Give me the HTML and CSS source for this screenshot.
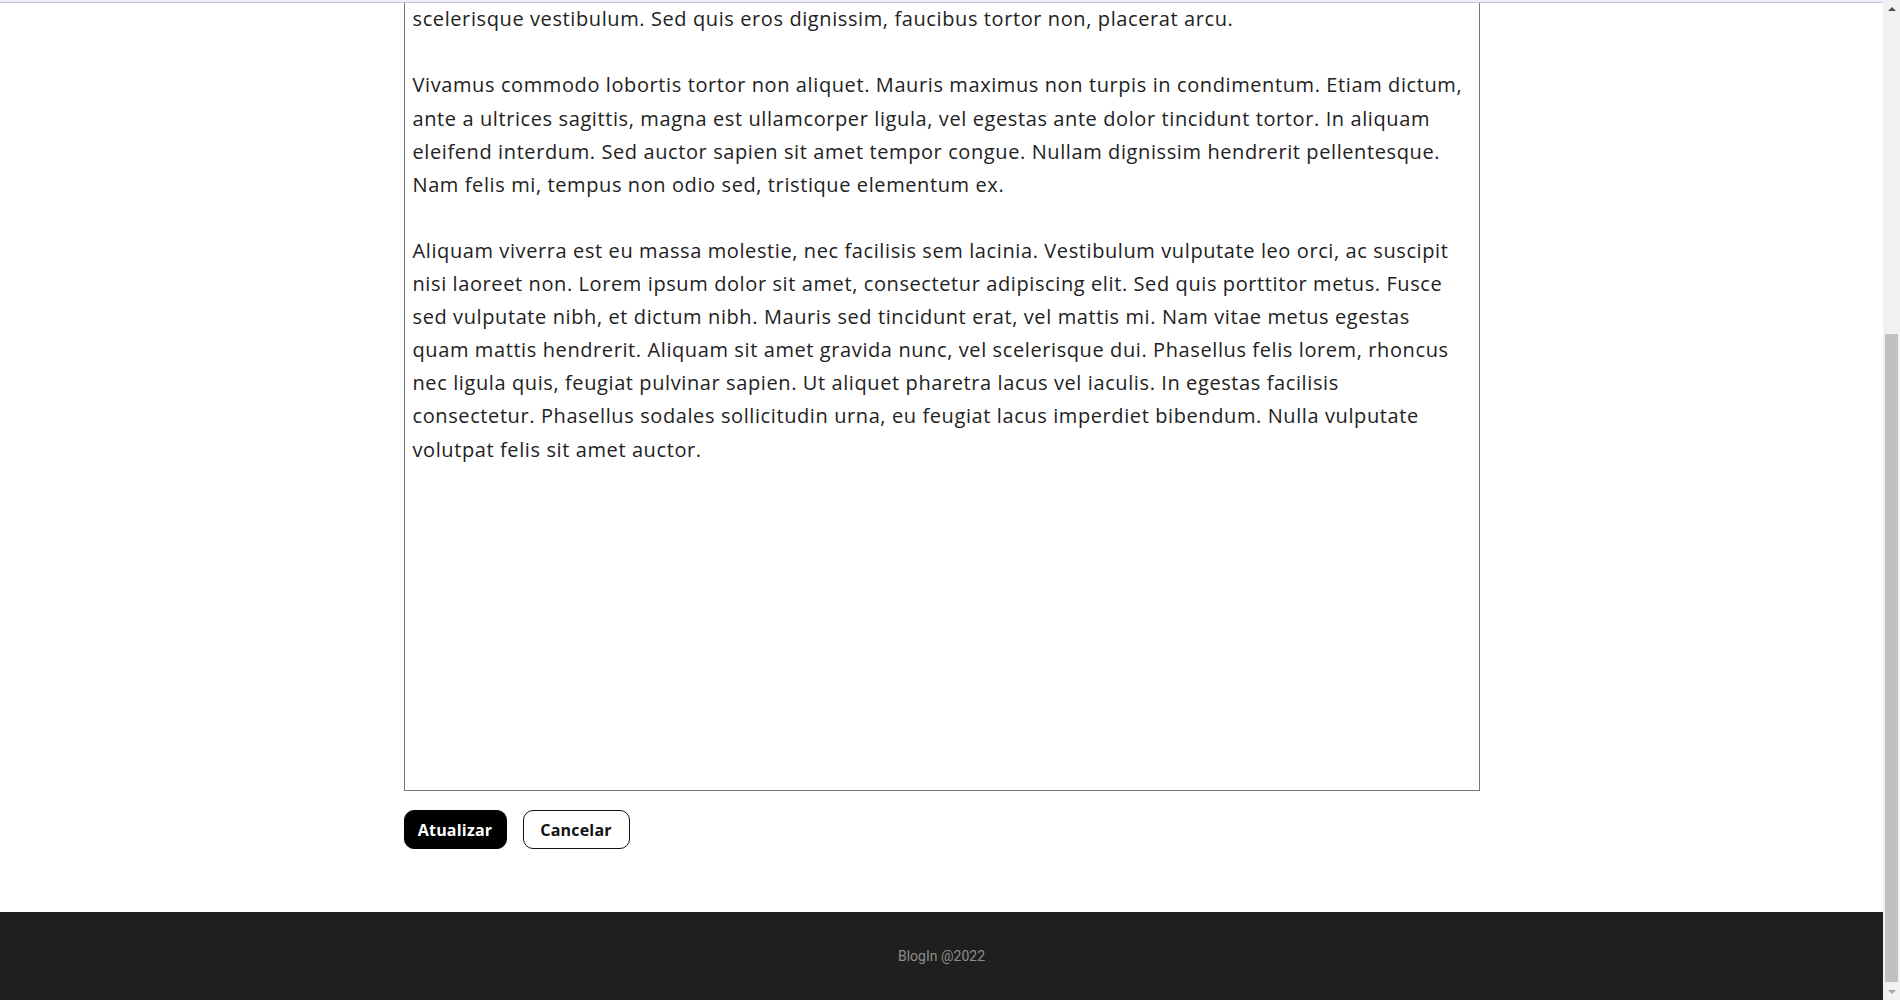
FILE: index.html
```html
<!DOCTYPE html>
<html lang="pt-BR">
<head>
<meta charset="utf-8">
<title>BlogIn - Editar post</title>
<link rel="stylesheet" href="styles.css">
</head>
<body>
<div class="topline"></div>
<div class="scrollbar" aria-hidden="true">
  <span class="sb-arrow sb-up"></span>
  <span class="sb-track"><span class="sb-thumb"></span></span>
  <span class="sb-arrow sb-down"></span>
</div>
<header class="site-header">
  <span class="brand">BlogIn</span>
</header>
<main class="main">
  <form class="editor">
    <h1 class="editor-title">Editar post</h1>
    <input class="field" type="text" value="Lorem ipsum dolor sit amet">
    <input class="field" type="text" value="Categoria">
    <label class="field-label">Conteúdo</label>
    <textarea class="content" wrap="off">Lorem ipsum dolor sit amet, consectetur adipiscing elit. Integer nec odio. Praesent libero. Sed cursus ante
dapibus diam. Sed nisi. Nulla quis sem at nibh elementum imperdiet. Duis sagittis ipsum. Praesent mauris.
Fusce nec tellus sed augue semper porta. Mauris massa. Vestibulum lacinia arcu eget nulla. Class aptent
scelerisque vestibulum. Sed quis eros dignissim, faucibus tortor non, placerat arcu.

Vivamus commodo lobortis tortor non aliquet. Mauris maximus non turpis in condimentum. Etiam dictum,
ante a ultrices sagittis, magna est ullamcorper ligula, vel egestas ante dolor tincidunt tortor. In aliquam
eleifend interdum. Sed auctor sapien sit amet tempor congue. Nullam dignissim hendrerit pellentesque.
Nam felis mi, tempus non odio sed, tristique elementum ex.

Aliquam viverra est eu massa molestie, nec facilisis sem lacinia. Vestibulum vulputate leo orci, ac suscipit
nisi laoreet non. Lorem ipsum dolor sit amet, consectetur adipiscing elit. Sed quis porttitor metus. Fusce
sed vulputate nibh, et dictum nibh. Mauris sed tincidunt erat, vel mattis mi. Nam vitae metus egestas
quam mattis hendrerit. Aliquam sit amet gravida nunc, vel scelerisque dui. Phasellus felis lorem, rhoncus
nec ligula quis, feugiat pulvinar sapien. Ut aliquet pharetra lacus vel iaculis. In egestas facilisis
consectetur. Phasellus sodales sollicitudin urna, eu feugiat lacus imperdiet bibendum. Nulla vulputate
volutpat felis sit amet auctor.</textarea>
    <div class="actions">
      <button type="button" class="btn btn-primary">Atualizar</button>
      <button type="button" class="btn btn-outline">Cancelar</button>
    </div>
  </form>
</main>
<footer class="site-footer">
  <p class="footer-text">BlogIn @2022</p>
</footer>
<script src="script.js"></script>
</body>
</html>
```

FILE: styles.css
```css
html {
  scroll-behavior: auto;
}

body {
  margin: 0 17px 0 0;
  background: #ffffff;
  font-family: "Open Sans", "Liberation Sans", sans-serif;
  color: #222222;
}

.topline {
  position: fixed;
  top: 0;
  left: 0;
  right: 17px;
  height: 2px;
  background: #eef0f9;
  border-bottom: 1px solid #c3c6d6;
  z-index: 10;
}

.scrollbar {
  position: fixed;
  top: 0;
  right: 0;
  bottom: 0;
  width: 17px;
  background: #f1f1f1;
  display: flex;
  flex-direction: column;
  z-index: 20;
}

.sb-arrow {
  height: 17px;
  flex: none;
  display: flex;
  align-items: center;
  justify-content: center;
}

.sb-arrow::before {
  content: "";
  width: 0;
  height: 0;
  border-left: 4px solid transparent;
  border-right: 4px solid transparent;
}

.sb-up::before {
  border-bottom: 4px solid #505050;
}

.sb-down::before {
  border-top: 4px solid #a3a3a3;
}

.sb-track {
  flex: 1;
  display: flex;
  flex-direction: column;
  justify-content: flex-end;
  padding: 0 2px 1px;
}

.sb-thumb {
  height: 648px;
  background: #c1c1c1;
}

.site-header {
  height: 80px;
  display: flex;
  align-items: center;
  justify-content: center;
}

.brand {
  font-size: 24px;
  font-weight: 700;
}

.main {
  padding: 40px 0 63px;
}

.editor {
  width: 1076px;
  margin: 0 auto;
  display: flex;
  flex-direction: column;
}

.editor-title {
  margin: 0 0 24px;
  font-size: 32px;
  line-height: 48px;
  font-weight: 700;
}

.field {
  height: 48px;
  margin: 0 0 24px;
  padding: 0 12px;
  box-sizing: border-box;
  border: 1px solid #767676;
  font-family: inherit;
  font-size: 18px;
}

.field-label {
  display: block;
  font-size: 18px;
  line-height: 27px;
  margin-bottom: 16px;
}

.content {
  display: block;
  box-sizing: border-box;
  width: 1076px;
  height: 897px;
  margin: 0;
  padding: 8px 8px 8px;
  border: 1px solid #767676;
  font-family: "Open Sans", "Liberation Sans", sans-serif;
  font-size: 20px;
  letter-spacing: 0.6px;
  line-height: 33.1px;
  color: #222222;
  white-space: pre;
  overflow: hidden;
  resize: none;
  outline: none;
}

.actions {
  display: flex;
  gap: 16px;
  margin-top: 19px;
}

.btn {
  height: 39px;
  box-sizing: border-box;
  padding: 0 12px;
  border-radius: 10px;
  font-family: "Open Sans", "Liberation Sans", sans-serif;
  font-size: 16px;
  font-weight: 700;
  letter-spacing: 0.2px;
  cursor: pointer;
}

.btn-primary {
  width: 103px;
  background: #000000;
  color: #ffffff;
  border: 1px solid #000000;
}

.btn-outline {
  width: 107px;
  background: #ffffff;
  color: #111111;
  border: 1px solid #111111;
}

.site-footer {
  height: 88px;
  background: #1f1f1f;
  display: flex;
  align-items: center;
  justify-content: center;
}

.footer-text {
  margin: 0;
  font-family: Roboto, "Liberation Sans", sans-serif;
  font-size: 14px;
  color: #8d8d8d;
}
```

FILE: script.js
```js
window.scrollTo(0, document.documentElement.scrollHeight);
window.addEventListener('load', function () {
  window.scrollTo(0, document.documentElement.scrollHeight);
});
```
